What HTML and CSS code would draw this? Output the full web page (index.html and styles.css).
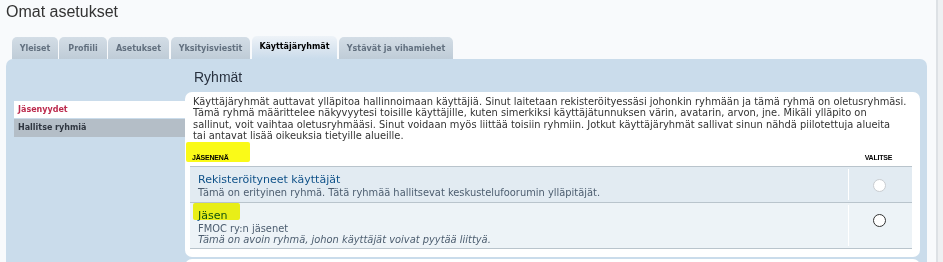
FILE: index.html
```html
<!DOCTYPE html>
<html lang="fi">
<head>
<meta charset="utf-8">
<title>Omat asetukset</title>
<link rel="stylesheet" href="styles.css">
</head>
<body>
<div class="page">
  <div class="wrap">
    <h2 class="title">Omat asetukset</h2>
    <ul class="tabs">
      <li class="tab t1">Yleiset</li>
      <li class="tab t2">Profiili</li>
      <li class="tab t3">Asetukset</li>
      <li class="tab t4">Yksityisviestit</li>
      <li class="tab t5 active">Käyttäjäryhmät</li>
      <li class="tab t6">Ystävät ja vihamiehet</li>
    </ul>
    <div class="panel">
      <ul class="menu">
        <li class="mitem current">Jäsenyydet</li>
        <li class="mitem">Hallitse ryhmiä</li>
      </ul>
      <div class="main">
        <h3 class="heading">Ryhmät</h3>
        <div class="box">
          <p class="intro">Käyttäjäryhmät auttavat ylläpitoa hallinnoimaan käyttäjiä. Sinut laitetaan rekisteröityessäsi johonkin ryhmään ja tämä ryhmä on oletusryhmäsi.<br>Tämä ryhmä määrittelee näkyvyytesi toisille käyttäjille, kuten simerkiksi käyttäjätunnuksen värin, avatarin, arvon, jne. Mikäli ylläpito on<br>sallinut, voit vaihtaa oletusryhmääsi. Sinut voidaan myös liittää toisiin ryhmiin. Jotkut käyttäjäryhmät sallivat sinun nähdä piilotettuja alueita<br>tai antavat lisää oikeuksia tietyille alueille.</p>
          <div class="list">
            <div class="lhead">
              <span class="hname">Jäsenenä</span>
              <span class="hsel">Valitse</span>
            </div>
            <div class="row bg2">
              <div class="cell">
                <a class="gname">Rekisteröityneet käyttäjät</a>
                <div class="desc">Tämä on erityinen ryhmä. Tätä ryhmää hallitsevat keskustelufoorumin ylläpitäjät.</div>
              </div>
              <div class="sel"><span class="radio disabled"></span></div>
            </div>
            <div class="row bg1">
              <div class="cell">
                <a class="gname">Jäsen</a>
                <div class="desc">FMOC ry:n jäsenet</div>
                <div class="desc it">Tämä on avoin ryhmä, johon käyttäjät voivat pyytää liittyä.</div>
              </div>
              <div class="sel"><span class="radio"></span></div>
            </div>
          </div>
          <span class="hl hl1"></span>
          <span class="hl hl2"></span>
        </div>
        <div class="box box2"></div>
      </div>
    </div>
  </div>
  <div class="strip"></div>
</div>
</body>
</html>
```
FILE: styles.css
```css
* { box-sizing: border-box; }
html, body { margin: 0; padding: 0; }
body {
  background: #f8fafc;
  font-family: "DejaVu Sans", Verdana, sans-serif;
  color: #333;
  height: 262px;
  overflow: hidden;
}
.page { display: flex; height: 262px; overflow: hidden; }
.wrap { width: 936px; padding-left: 6px; padding-right: 9px; }
.strip { width: 7px; background: #eef0f2; border-left: 2px solid #dde1e5; }

.title {
  margin: 0;
  padding-top: 1px;
  height: 36px;
  font-family: "Liberation Sans", Arial, sans-serif;
  font-weight: normal;
  font-size: 16px;
  line-height: 22px;
  color: #333;
}

.tabs {
  list-style: none;
  margin: 0;
  padding: 0 0 0 6px;
  display: flex;
  align-items: flex-end;
  gap: 1px;
  height: 23px;
}
.tab {
  height: 22px;
  background: linear-gradient(#d3dde6, #bfccd7);
  border-radius: 5px 5px 0 0;
  font-weight: bold;
  font-size: 8px;
  color: #62707f;
  display: flex;
  align-items: center;
  justify-content: center;
  padding-top: 1px;
}
.t1 { width: 46px; }
.t2 { width: 48px; }
.t3 { width: 61px; }
.t4 { width: 79px; margin-left: 1px; }
.t5 { width: 85px; margin-left: 1px; }
.t6 { width: 114px; margin-left: 1px; }
.tab.active {
  height: 23px;
  background: linear-gradient(#eef3f8, #d5e2ee 70%, #cadceb);
  color: #000;
  padding-top: 0;
  padding-bottom: 2px;
}

.panel {
  background: #cadceb;
  border-radius: 7px 7px 0 0;
  height: 203px;
  display: flex;
  padding-left: 8px;
}
.menu {
  list-style: none;
  margin: 42px 0 0 0;
  padding: 0;
  width: 171px;
  display: flex;
  flex-direction: column;
  gap: 1px;
}
.mitem {
  height: 18px;
  padding-left: 4px;
  font-size: 8px;
  font-weight: bold;
  line-height: 18px;
  background: #b4bec7;
  color: #2f3640;
}
.mitem.current {
  height: 17px;
  line-height: 17px;
  background: #fff;
  color: #bc2a4d;
}

.main { width: 735px; }
.heading {
  margin: 0;
  padding: 9px 0 0 9px;
  height: 33px;
  font-family: "Liberation Sans", Arial, sans-serif;
  font-weight: normal;
  font-size: 14px;
  line-height: 18px;
  color: #28313f;
}
.box {
  position: relative;
  background: #fff;
  border-radius: 7px;
  height: 165px;
  padding: 4px 8px 0 5px;
}
.box2 { margin-top: 2px; height: 20px; border-radius: 7px 7px 0 0; }

.intro {
  margin: 0 -8px 0 0;
  padding-left: 3px;
  font-size: 9.9px;
  line-height: 11.4px;
  color: #333;
  white-space: nowrap;
}
.list { margin-top: 10px; }
.lhead {
  display: flex;
  justify-content: space-between;
  height: 15px;
  font-family: "Liberation Sans", Arial, sans-serif;
  font-size: 7px;
  font-weight: bold;
  text-transform: uppercase;
  color: #000;
  letter-spacing: -0.2px;
  border-bottom: 1px solid #b9c4cc;
}
.hname { padding-left: 2px; padding-top: 2px; }
.hsel { width: 64px; text-align: center; padding-top: 2px; padding-right: 3px; }
.row {
  display: flex;
  border-bottom: 1px solid #b9c4cc;
}
.bg2 { background: #e2ebf2; height: 36px; }
.bg1 { background: #edf3f7; height: 46px; }
.cell { flex: 1; padding: 6px 0 0 8px; }
.gname {
  display: block;
  color: #105289;
  font-size: 11px;
  line-height: 14px;
}
.desc { font-size: 9.9px; line-height: 11px; color: #4c5d6f; }
.desc.it { font-style: italic; }
.sel {
  width: 64px;
  border-left: 1px solid #fff;
  margin: 2px 0;
  display: flex;
  justify-content: center;
  padding-top: 10px;
  padding-right: 3px;
}
.bg1 .sel { padding-top: 9px; }
.radio {
  width: 13px;
  height: 13px;
  border-radius: 50%;
  background: #fff;
  border: 1px solid #333;
}
.radio.disabled { border-color: #c9cdd1; }

.hl {
  position: absolute;
  background: #fafa18;
  mix-blend-mode: multiply;
  border-radius: 2px;
}
.hl1 { left: 1px; top: 50px; width: 64px; height: 20px; }
.hl2 { left: 8px; top: 111px; width: 47px; height: 17px; }
```
